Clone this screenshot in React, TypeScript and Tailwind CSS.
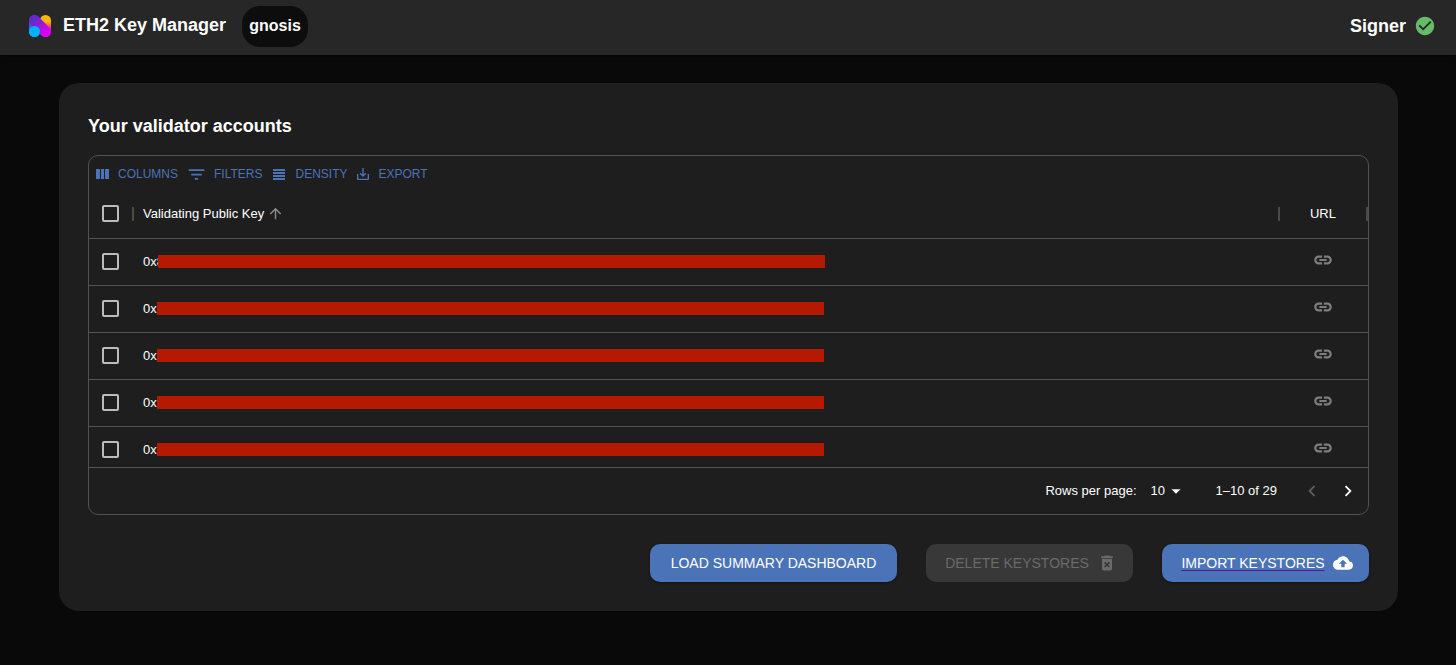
import type { ReactNode } from "react";

type IconProps = { d: string; className: string };

function Icon({ d, className }: IconProps) {
  return (
    <svg viewBox="0 0 24 24" fill="currentColor" aria-hidden="true" className={`shrink-0 ${className}`}>
      <path d={d} />
    </svg>
  );
}

const icons = {
  columns: "M4 5.33h5.33v13.34H4zM10.67 5.33h4v13.34h-4zM16 5.33h5.33v13.34H16z",
  filter: "M10 18h4v-2h-4v2zM3 6v2h18V6H3zm3 7h12v-2H6v2z",
  density: "M4 5.33h16V8H4zM4 9.33h16V12H4zM4 13.33h16V16H4zM4 17.33h16V20H4z",
  save: "M19 12v7H5v-7H3v7c0 1.1.9 2 2 2h14c1.1 0 2-.9 2-2v-7h-2zm-6 .67l2.59-2.58L17 11.5l-5 5-5-5 1.41-1.41L11 12.67V3h2z",
  up: "M4 12l1.41 1.41L11 7.83V20h2V7.83l5.58 5.59L20 12l-8-8-8 8z",
  link: "M4.8 12c0-1.3 1-2.5 2.4-2.5H11V7H7.2C4.5 7 2.4 9.2 2.4 12s2.1 5 4.8 5H11v-2.5H7.2C5.8 14.5 4.8 13.3 4.8 12zM8 13.2h8v-2.4H8v2.4zM16.8 7H13v2.5h3.8c1.4 0 2.4 1.2 2.4 2.5s-1 2.5-2.4 2.5H13V17h3.8c2.7 0 4.8-2.2 4.8-5s-2.1-5-4.8-5z",
  dropDown: "M7 10l5 5 5-5z",
  left: "M15.41 16.59L10.83 12l4.58-4.59L14 6l-6 6 6 6z",
  right: "M8.59 16.59L13.17 12 8.59 7.41 10 6l6 6-6 6z",
  trash:
    "M6 19c0 1.1.9 2 2 2h8c1.1 0 2-.9 2-2V7H6v12zm2.46-7.12l1.41-1.41L12 12.59l2.12-2.12 1.41 1.41L13.41 14l2.12 2.12-1.41 1.41L12 15.41l-2.12 2.12-1.41-1.41L10.59 14l-2.13-2.12zM15.5 4l-1-1h-5l-1 1H5v2h14V4z",
  cloud:
    "M19.35 10.04C18.67 6.59 15.64 4 12 4 9.11 4 6.6 5.64 5.35 8.04 2.34 8.36 0 10.91 0 14c0 3.31 2.69 6 6 6h13c2.76 0 5-2.24 5-5 0-2.64-2.05-4.78-4.65-4.96zM14 13v4h-4v-4H7l5-5 5 5h-3z",
  check:
    "M12 2C6.48 2 2 6.48 2 12s4.48 10 10 10 10-4.48 10-10S17.52 2 12 2zm-2 15l-5-5 1.41-1.41L10 14.17l7.59-7.59L19 8l-9 9z",
};

function Logo() {
  return (
    <svg viewBox="0 0 22 22" className="size-[22px] shrink-0" aria-hidden="true">
      <defs>
        <linearGradient id="logo-left" x1="0" y1="0" x2="0" y2="1">
          <stop offset="0.3" stopColor="#5a35d6" />
          <stop offset="0.75" stopColor="#008cff" />
        </linearGradient>
        <linearGradient id="logo-right" x1="0" y1="0" x2="0" y2="1">
          <stop offset="0.3" stopColor="#ffb800" />
          <stop offset="0.5" stopColor="#ff5a5a" />
          <stop offset="0.75" stopColor="#e000f0" />
        </linearGradient>
        <linearGradient id="logo-bar" gradientUnits="userSpaceOnUse" x1="4" y1="4" x2="18" y2="18">
          <stop offset="0" stopColor="#5f2bcb" />
          <stop offset="0.5" stopColor="#9a1ad8" />
          <stop offset="1" stopColor="#dc00f4" />
        </linearGradient>
      </defs>
      <rect x="0" y="0" width="11" height="22" rx="5.5" fill="url(#logo-left)" />
      <rect x="11" y="0" width="11" height="22" rx="5.5" fill="url(#logo-right)" />
      <path d="M5.5 5.5L16.5 16.5" stroke="url(#logo-bar)" strokeWidth="11" strokeLinecap="round" />
      <circle cx="5.5" cy="16.5" r="5.5" fill="#00b2f8" />
    </svg>
  );
}

function ToolbarButton({ icon, size, children }: { icon: string; size: string; children: ReactNode }) {
  return (
    <button type="button" className="flex items-center gap-[7px] text-xs text-[#4a73b8] uppercase">
      <Icon d={icon} className={size} />
      {children}
    </button>
  );
}

function Checkbox({ label }: { label: string }) {
  return (
    <input
      type="checkbox"
      aria-label={label}
      className="block size-[17px] appearance-none rounded-[2px] border-2 border-[#bcbcbc] checked:bg-[#4a73b8]"
    />
  );
}

function Separator() {
  return <span className="h-[14px] w-[2px] shrink-0 bg-[#4a4a4a]" />;
}

const accounts = ["0x8", "0x", "0x", "0x", "0x"];

export default function App() {
  return (
    <div className="min-h-screen bg-[#090909] font-['Liberation_Sans',Arial,sans-serif] text-white">
      <header className="flex h-[55px] items-center justify-between bg-[#272727] pr-5 pb-[3px] pl-[29px] shadow-[0_1px_4px_rgba(0,0,0,0.6)]">
        <div className="flex items-center">
          <Logo />
          <h1 className="ml-3 pb-[2px] text-lg leading-6 font-bold">ETH2 Key Manager</h1>
          <span className="ml-4 flex h-[41px] w-[66px] items-center justify-center rounded-[18px] bg-[#0d0d0d] text-base font-bold">
            gnosis
          </span>
        </div>
        <div className="flex items-center gap-2">
          <span className="text-lg leading-6 font-bold">Signer</span>
          <Icon d={icons.check} className="size-[22px] text-[#66bb6a]" />
        </div>
      </header>

      <main className="mt-7 mr-[58px] ml-[59px] rounded-[20px] bg-[#1e1e1e] p-[29px]">
        <h2 className="mb-[15px] text-lg leading-7 font-bold">Your validator accounts</h2>

        <section className="overflow-hidden rounded-[10px] border border-[#515151]">
          <div className="flex h-[34px] items-center gap-2 pt-[2px] pl-1">
            <ToolbarButton icon={icons.columns} size="size-[18px]">Columns</ToolbarButton>
            <ToolbarButton icon={icons.filter} size="size-[21px]">Filters</ToolbarButton>
            <ToolbarButton icon={icons.density} size="size-[18px]">Density</ToolbarButton>
            <ToolbarButton icon={icons.save} size="size-4">Export</ToolbarButton>
          </div>

          <div className="h-[277px] overflow-hidden">
            <table className="w-full table-fixed border-collapse text-[13px]">
              <thead>
                <tr className="h-12 border-b border-[#515151]">
                  <th scope="col" className="w-[43px] p-0 pl-[13px]">
                    <Checkbox label="Select all rows" />
                  </th>
                  <th scope="col" className="p-0 font-normal">
                    <div className="flex items-center">
                      <Separator />
                      <button type="button" className="ml-[9px] flex items-center gap-[3px]">
                        Validating Public Key
                        <Icon d={icons.up} className="size-[17px] text-[#8c8c8c]" />
                      </button>
                    </div>
                  </th>
                  <th scope="col" className="w-[90px] p-0 font-normal">
                    <div className="flex items-center justify-between">
                      <Separator />
                      URL
                      <Separator />
                    </div>
                  </th>
                </tr>
              </thead>
              <tbody>
                {accounts.map((account, index) => (
                  <tr key={index} className="h-[47px] border-b border-[#515151]">
                    <td className="p-0 pl-[13px]">
                      <Checkbox label={`Select row ${index + 1}`} />
                    </td>
                    <td className="p-0 pl-[11px]">
                      <div className="flex items-center">
                        <span>{account}</span>
                        <span className={`h-[13px] w-[667px] bg-[#b51a00] ${account.length > 2 ? "-ml-[6px]" : ""}`} />
                      </div>
                    </td>
                    <td className="p-0">
                      <a href="#validator" aria-label="Open validator" className="flex justify-center pb-1 text-[#7d7d7d]">
                        <Icon d={icons.link} className="size-[22px]" />
                      </a>
                    </td>
                  </tr>
                ))}
              </tbody>
            </table>
          </div>

          <footer className="flex h-[47px] items-center justify-end border-t border-[#515151] pr-[9px] text-[13px]">
            <label htmlFor="page-size">Rows per page:</label>
            <div className="relative ml-[14px] flex items-center">
              <select id="page-size" defaultValue="10" className="appearance-none bg-transparent pr-5 text-[13px]">
                <option>10</option>
                <option>25</option>
              </select>
              <Icon d={icons.dropDown} className="pointer-events-none absolute -right-px size-[22px]" />
            </div>
            <span className="ml-[30px]">1–10 of 29</span>
            <button type="button" disabled aria-label="Previous page" className="ml-6 text-[#5f5f5f]">
              <Icon d={icons.left} className="size-[22px]" />
            </button>
            <button type="button" aria-label="Next page" className="ml-[14px]">
              <Icon d={icons.right} className="size-[22px]" />
            </button>
          </footer>
        </section>

        <div className="mt-[29px] flex flex-wrap justify-end gap-[29px] text-sm">
          <button
            type="button"
            className="flex h-[38px] min-w-[247px] items-center justify-center rounded-[10px] bg-[#4a73b8] shadow-[0_1px_3px_rgba(0,0,0,0.4)]"
          >
            LOAD SUMMARY DASHBOARD
          </button>
          <button
            type="button"
            disabled
            className="flex h-[38px] min-w-[207px] items-center justify-center gap-2 rounded-[10px] bg-[#383838] pl-[3px] text-[#6a6a6a]"
          >
            DELETE KEYSTORES
            <Icon d={icons.trash} className="size-5" />
          </button>
          <a
            href="#import"
            className="flex h-[38px] min-w-[207px] items-center justify-center gap-2 rounded-[10px] bg-[#4a73b8] pl-[3px] shadow-[0_1px_3px_rgba(0,0,0,0.4)]"
          >
            <span className="underline decoration-[#5a1494] decoration-1 underline-offset-2 [text-decoration-skip-ink:none]">
              IMPORT KEYSTORES
            </span>
            <Icon d={icons.cloud} className="size-5" />
          </a>
        </div>
      </main>
    </div>
  );
}
